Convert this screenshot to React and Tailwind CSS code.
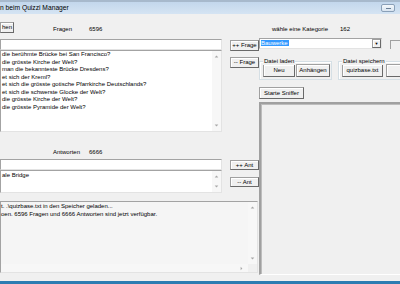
import React from "react";

const btn =
  "flex items-center justify-center whitespace-nowrap bg-[#f0f0f0] border border-[#a0a0a0] border-r-[#696969] border-b-[#696969] shadow-[inset_1px_1px_0_#ffffff]";

const questions = [
  "die berühmte Brücke bei San Francisco?",
  "die grösste Kirche der Welt?",
  "man die bekannteste Brücke Dresdens?",
  "et sich der Kreml?",
  "et sich die grösste gotische Pfarrkirche Deutschlands?",
  "et sich die schwerste Glocke der Welt?",
  "die grösste Kirche der Welt?",
  "die grösste Pyramide der Welt?"
];

function Arrow({ dir }) {
  const pts = {
    up: "1,4 4,1 7,4",
    down: "1,1 4,4 7,1",
    right: "1,1 4,4 1,7"
  }[dir];
  const box = dir === "right" ? "0 0 5 8" : "0 0 8 5";
  return (
    <svg viewBox={box} className={dir === "right" ? "w-[3px] h-[5px]" : "w-[5px] h-[3px]"}>
      <polygon points={pts} fill="#a8a8a8" />
    </svg>
  );
}

function VScroll() {
  return (
    <div className="flex w-[9px] flex-col items-center justify-between bg-[#f7f7f7] py-[4px]">
      <Arrow dir="up" />
      <Arrow dir="down" />
    </div>
  );
}

function GroupBox({ label, className, children }) {
  return (
    <div className={`relative mt-[3px] h-[19px] border border-[#d5dfe5] shadow-[inset_1px_1px_0_#ffffff] ${className}`}>
      <span className="absolute -top-[5px] left-[3px] bg-[#f0f0f0] px-[1px] leading-[8px]">{label}</span>
      <div className="flex pl-[3px] pt-[2px]">{children}</div>
    </div>
  );
}

export default function App() {
  return (
    <div className="flex h-[284px] w-[400px] flex-col overflow-hidden bg-[#f0f0f0] font-['Liberation_Sans',Arial,sans-serif] text-[6px] text-black">
      <div className="flex h-[14px] items-center justify-between border-t-2 border-[#a7b9cc] bg-gradient-to-b from-[#c3d7ec] to-[#d5e4f3] pr-[5px]">
        <span className="text-[6.7px] leading-[8px]">n beim Quizzi Manager</span>
        <div className="flex h-[8px] w-[14px] items-center justify-center rounded-[2px] border border-[#8aa0b8] bg-gradient-to-b from-[#f4f8fc] to-[#d8e4f0]">
          <div className="h-[1px] w-[5px] bg-[#6a7f96]" />
        </div>
      </div>

      <div className="flex h-[267px]">
        <div className="flex w-[266px] flex-col">
          <div className="mt-[8px] flex h-[11px]">
            <div className={`${btn} w-[14px] justify-end pr-[1px]`}>hen</div>
            <div className="ml-[39px] flex pt-[3px] leading-[8px]">
              <span className="w-[36px]">Fragen</span>
              <span>6596</span>
            </div>
          </div>

          <div className="mt-[6px] flex">
            <div className="flex w-[222px] flex-col">
              <div className="h-[11px] border border-[#a3a3a3] border-b-[#e3e3e3] border-r-[#e3e3e3] bg-white" />
              <div className="flex h-[82px] border border-[#a3a3a3] border-b-[#e3e3e3] border-r-[#e3e3e3] bg-white">
                <div className="flex-1 overflow-hidden whitespace-nowrap pl-[1px] leading-[7.55px]">
                  {questions.map((q, i) => (
                    <div key={i}>{q}</div>
                  ))}
                </div>
                <VScroll />
              </div>
            </div>
            <div className="ml-[8px] flex w-[29px] flex-col">
              <div className={`${btn} mt-[1px] h-[11px]`}>++ Frage</div>
              <div className={`${btn} mt-[6px] h-[11px]`}>-- Frage</div>
            </div>
          </div>

          <div className="mt-[16px] flex h-[8px] leading-[8px]">
            <span className="ml-[53px] w-[36px]">Antworten</span>
            <span>6666</span>
          </div>

          <div className="mt-[3px] flex">
            <div className="flex w-[222px] flex-col">
              <div className="h-[11px] border border-[#a3a3a3] border-b-[#e3e3e3] border-r-[#e3e3e3] bg-white" />
              <div className="flex h-[23px] border border-[#a3a3a3] border-b-[#e3e3e3] border-r-[#e3e3e3] bg-white">
                <div className="flex-1 pl-[1px] pt-[1px] leading-[7.55px]">ale Bridge</div>
                <VScroll />
              </div>
            </div>
            <div className="ml-[8px] flex w-[29px] flex-col">
              <div className={`${btn} mt-[1px] h-[10px]`}>++ Ant</div>
              <div className={`${btn} mt-[7px] h-[10px]`}>-- Ant</div>
            </div>
          </div>

          <div className="mt-[8px] flex h-[72px] w-[258px] flex-col border border-[#a3a3a3] border-b-[#e3e3e3] border-r-[#e3e3e3] bg-[#f5f5f5]">
            <div className="flex flex-1">
              <div className="flex-1 whitespace-nowrap pt-[1px] leading-[7.6px]">
                <div>t. .\quizbase.txt in den Speicher geladen...</div>
                <div>oen. 6596 Fragen und 6666 Antworten sind jetzt verfügbar.</div>
              </div>
              <VScroll />
            </div>
            <div className="flex h-[8px]">
              <div className="flex flex-1 items-center justify-end bg-[#f7f7f7] pr-[5px]">
                <Arrow dir="right" />
              </div>
              <div className="w-[9px] bg-[#f0f0f0]" />
            </div>
          </div>
        </div>

        <div className="flex flex-1 flex-col">
          <div className="mt-[11px] flex h-[8px] leading-[8px]">
            <span className="ml-[13px] w-[68px]">wähle eine Kategorie</span>
            <span>162</span>
          </div>

          <div className="mt-[5px] flex h-[11px]">
            <div className="flex w-[123px] items-center border border-[#a3a3a3] border-b-[#e3e3e3] border-r-[#e3e3e3] bg-white">
              <div className="ml-[1px] flex-1">
                <span className="bg-[#3399ff] pr-[1px] leading-[7px] text-white">Bauwerke</span>
              </div>
              <div className={`${btn} h-full w-[9px] text-[4px]`}>▼</div>
            </div>
            <div className="ml-[8px] mt-[2px] h-[9px] w-[10px] border-l border-t border-[#a0a0a0]" />
          </div>

          <div className="mt-[9px] flex h-[22px]">
            <GroupBox label="Datei laden" className="w-[73px]">
              <div className={`${btn} h-[13px] w-[32px]`}>Neu</div>
              <div className={`${btn} ml-[1px] h-[13px] w-[34px]`}>Anhängen</div>
            </GroupBox>
            <GroupBox label="Datei speichern" className="ml-[6px] w-[70px]">
              <div className={`${btn} h-[13px] w-[41px]`}>quizbase.txt</div>
              <div className={`${btn} ml-[3px] h-[13px] w-[20px]`} />
            </GroupBox>
          </div>

          <div className={`${btn} mt-[7px] h-[12px] w-[45px]`}>Starte Sniffer</div>

          <div className="mt-[3px] h-[173px] border-l-2 border-t-2 border-b border-[#a0a0a0] border-b-[#ffffff] shadow-[inset_1px_1px_0_#bdbdbd]" />
        </div>
      </div>

      <div className="h-[3px] bg-[#2c7cb2]" />
    </div>
  );
}
